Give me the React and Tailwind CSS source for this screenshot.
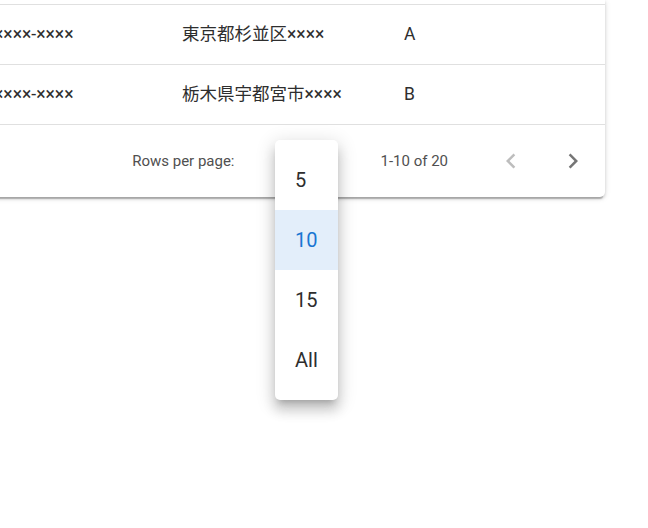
import React from 'react';

const rows = [
  { tel: '××××-××××', addr: '東京都杉並区××××', rank: 'A' },
  { tel: '××××-××××', addr: '栃木県宇都宮市××××', rank: 'B' },
];

const options = ['5', '10', '15', 'All'];

function Chevron({ dir, className }) {
  const d =
    dir === 'left'
      ? 'M15.41,16.58L10.83,12L15.41,7.41L14,6L8,12L14,18L15.41,16.58Z'
      : 'M8.59,16.58L13.17,12L8.59,7.41L10,6L16,12L10,18L8.59,16.58Z';
  return (
    <svg viewBox="0 0 24 24" className={className} fill="currentColor">
      <path d={d} />
    </svg>
  );
}

export default function App() {
  return (
    <div
      className="relative w-[648px] h-[528px] overflow-hidden bg-white"
      style={{ fontFamily: 'Roboto, "Noto Sans CJK JP", sans-serif' }}
    >
      {/* table card, scrolled so its left side is out of view */}
      <div className="ml-[-26px] w-[631px] flex flex-col bg-white rounded-b-[5px] shadow-[0_4px_1px_-2px_rgba(0,0,0,0.2),0_2px_3px_0_rgba(0,0,0,0.14),0_1px_6px_0_rgba(0,0,0,0.12)]">
        <div className="h-[5px] border-b border-[#e0e0e0]" />
        {rows.map((r) => (
          <div key={r.addr} className="flex h-[60px] items-center border-b border-[#e0e0e0] text-[17.5px] text-[#2e2e2e]">
            <div className="w-[188px] pl-[20px] whitespace-nowrap">{r.tel}</div>
            <div className="w-[222px] pl-[20px] whitespace-nowrap">{r.addr}</div>
            <div className="flex-1 pl-[20px]">{r.rank}</div>
          </div>
        ))}
        {/* footer */}
        <div className="flex h-[72px] items-center justify-end pr-[10px] text-[15px] text-[#505050]">
          <span>Rows per page:</span>
          <div className="w-[63px] ml-[42px]" />
          <span className="ml-[41px]">1-10 of 20</span>
          <button className="ml-[40px] w-[45px] h-[45px] flex items-center justify-center text-[#bdbdbd]">
            <Chevron dir="left" className="w-[30px] h-[30px]" />
          </button>
          <button className="ml-[17px] w-[45px] h-[45px] flex items-center justify-center text-[#757575]">
            <Chevron dir="right" className="w-[30px] h-[30px]" />
          </button>
        </div>
      </div>

      {/* rows-per-page menu */}
      <div className="absolute left-[275px] top-[140px] w-[63px] py-[10px] bg-white rounded-[5px] shadow-[0_6px_6px_-4px_rgba(0,0,0,0.2),0_10px_12px_1px_rgba(0,0,0,0.14),0_4px_18px_3px_rgba(0,0,0,0.12)]">
        {options.map((o) => (
          <div
            key={o}
            className={
              o === '10'
                ? 'h-[60px] flex items-center pl-[20px] text-[20px] text-[#1976d2] bg-[#e3eefa]'
                : 'h-[60px] flex items-center pl-[20px] text-[20px] text-[#2e2e2e]'
            }
          >
            {o}
          </div>
        ))}
      </div>
    </div>
  );
}
